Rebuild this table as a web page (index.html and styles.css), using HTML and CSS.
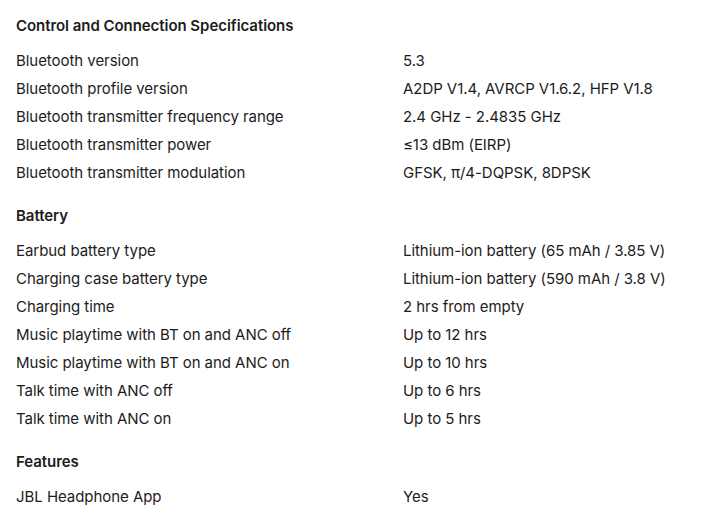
FILE: index.html
```html
<!DOCTYPE html>
<html lang="en">
<head>
<meta charset="utf-8">
<title>Specifications</title>
<link rel="stylesheet" href="styles.css">
</head>
<body>
<main class="specs">
  <section class="group">
    <h3 class="group-title">Control and Connection Specifications</h3>
    <dl class="rows">
      <div class="row"><dt>Bluetooth version</dt><dd>5.3</dd></div>
      <div class="row"><dt>Bluetooth profile version</dt><dd>A2DP V1.4, AVRCP V1.6.2, HFP V1.8</dd></div>
      <div class="row"><dt>Bluetooth transmitter frequency range</dt><dd>2.4 GHz - 2.4835 GHz</dd></div>
      <div class="row"><dt>Bluetooth transmitter power</dt><dd>≤13 dBm (EIRP)</dd></div>
      <div class="row"><dt>Bluetooth transmitter modulation</dt><dd>GFSK, π/4-DQPSK, 8DPSK</dd></div>
    </dl>
  </section>
  <section class="group">
    <h3 class="group-title">Battery</h3>
    <dl class="rows">
      <div class="row"><dt>Earbud battery type</dt><dd>Lithium-ion battery (65 mAh / 3.85 V)</dd></div>
      <div class="row"><dt>Charging case battery type</dt><dd>Lithium-ion battery (590 mAh / 3.8 V)</dd></div>
      <div class="row"><dt>Charging time</dt><dd>2 hrs from empty</dd></div>
      <div class="row"><dt>Music playtime with BT on and ANC off</dt><dd>Up to 12 hrs</dd></div>
      <div class="row"><dt>Music playtime with BT on and ANC on</dt><dd>Up to 10 hrs</dd></div>
      <div class="row"><dt>Talk time with ANC off</dt><dd>Up to 6 hrs</dd></div>
      <div class="row"><dt>Talk time with ANC on</dt><dd>Up to 5 hrs</dd></div>
    </dl>
  </section>
  <section class="group">
    <h3 class="group-title">Features</h3>
    <dl class="rows">
      <div class="row"><dt>JBL Headphone App</dt><dd>Yes</dd></div>
    </dl>
  </section>
</main>
</body>
</html>
```
FILE: styles.css
```css
html, body {
  margin: 0;
  padding: 0;
  background: #ffffff;
}
body {
  font-family: Inter, "Liberation Sans", sans-serif;
  font-size: 15px;
  color: #1c1c1c;
  letter-spacing: -0.05px;
}
.specs {
  padding: 12px 16px 0 16px;
  display: flex;
  flex-direction: column;
  gap: 15px;
}
.group-title {
  margin: 0 0 7px 0;
  font-size: 15px;
  font-weight: 600;
  line-height: 28px;
}
.rows {
  margin: 0;
}
.row {
  display: grid;
  grid-template-columns: 387px 1fr;
  line-height: 28px;
}
.row dt, .row dd {
  margin: 0;
}
```
